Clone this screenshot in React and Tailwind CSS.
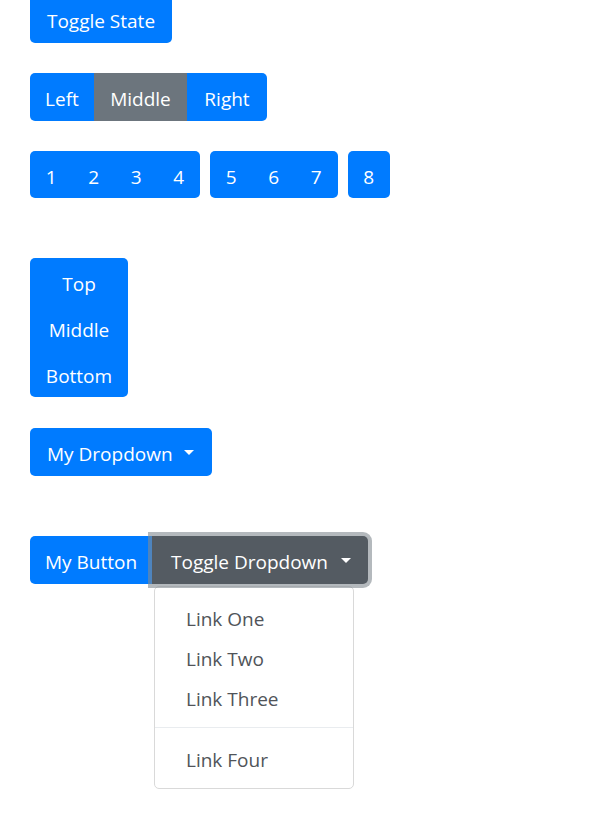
import React from 'react';

const Caret = () => (
  <span className="inline-block h-0 w-0 border-x-[5px] border-t-[5px] border-x-transparent border-t-white" />
);

const App = () => {
  const groups = [['1', '2', '3', '4'], ['5', '6', '7'], ['8']];

  return (
    <div
      className="min-h-screen bg-white pl-[30px] text-[19px] leading-[30px] text-white"
      style={{ fontFamily: '"Open Sans", "Noto Sans", sans-serif' }}
    >
      {/* Toggle button */}
      <div className="-mt-[5px]">
        <button className="h-[48px] w-[142px] rounded-[5px] bg-[#007bff] pt-[4px]">Toggle State</button>
      </div>

      {/* Horizontal group */}
      <div className="mt-[30px] flex">
        <button className="h-[48px] w-[64px] rounded-l-[5px] bg-[#007bff] pt-[4px]">Left</button>
        <button className="h-[48px] w-[93px] bg-[#6c757d] pt-[4px]">Middle</button>
        <button className="h-[48px] w-[80px] rounded-r-[5px] bg-[#007bff] pt-[4px]">Right</button>
      </div>

      {/* Toolbar */}
      <div className="mt-[30px] flex gap-[10px]">
        {groups.map((group, i) => (
          <div key={i} className="flex overflow-hidden rounded-[5px] bg-[#007bff]">
            {group.map((n) => (
              <button key={n} className="h-[47px] w-[42.5px] pt-[4px]">{n}</button>
            ))}
          </div>
        ))}
      </div>

      {/* Vertical group */}
      <div className="mt-[60px] flex h-[139px] w-[98px] flex-col overflow-hidden rounded-[5px] bg-[#007bff]">
        <button className="flex-1 pt-[5px]">Top</button>
        <button className="flex-1 pt-[5px]">Middle</button>
        <button className="flex-1 pt-[5px]">Bottom</button>
      </div>

      {/* Dropdown */}
      <div className="mt-[31px]">
        <button className="flex h-[48px] w-[182px] items-center justify-between rounded-[5px] bg-[#007bff] pl-[17px] pr-[18px]">
          <span className="pt-[4px]">My Dropdown</span>
          <Caret />
        </button>
      </div>

      {/* Split dropdown */}
      <div className="relative mt-[60px] flex">
        <button className="h-[48px] w-[122px] rounded-l-[5px] bg-[#007bff] pt-[4px]">My Button</button>
        <button className="relative z-10 flex h-[48px] w-[216px] items-center justify-between rounded-r-[5px] bg-[#545b62] pl-[19px] pr-[17px] shadow-[0_0_0_4px_rgba(130,138,145,0.6)]">
          <span className="pt-[4px]">Toggle Dropdown</span>
          <Caret />
        </button>

        <div className="absolute left-[124px] top-[50px] w-[200px] rounded-[5px] border border-[#d9d9d9] bg-white py-[10px] text-[#505459]">
          <div className="px-[31px] pb-[3px] pt-[7px]">Link One</div>
          <div className="px-[31px] pb-[3px] pt-[7px]">Link Two</div>
          <div className="px-[31px] pb-[3px] pt-[7px]">Link Three</div>
          <div className="my-[10px] border-t border-[#e9ecef]" />
          <div className="px-[31px] pb-[3px] pt-[7px]">Link Four</div>
        </div>
      </div>
    </div>
  );
};

export default App;
